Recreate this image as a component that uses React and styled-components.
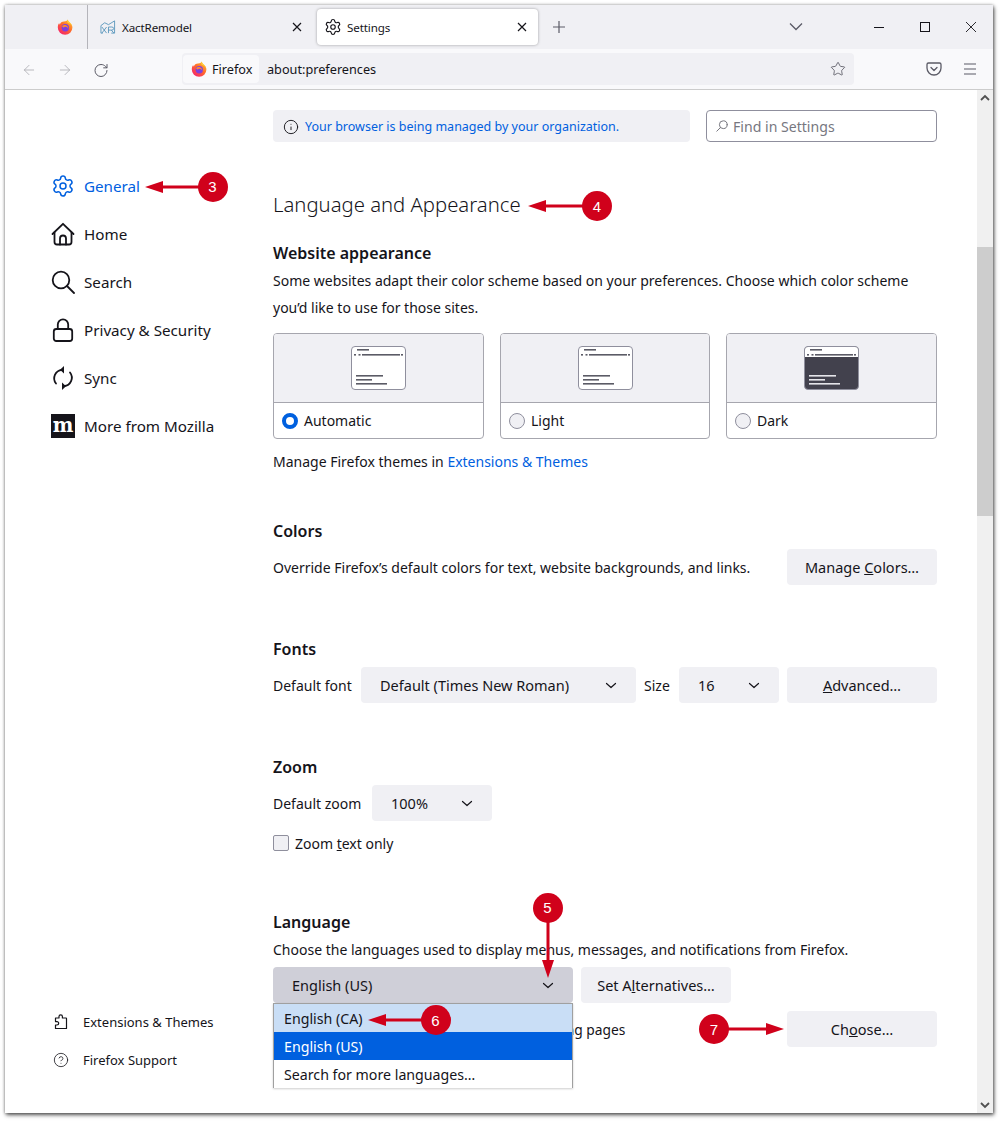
import React from "react";
import styled, { createGlobalStyle } from "styled-components";
import { ArrowLeft, ArrowRight, RotateCw, Star, Info, CircleHelp, Settings } from "lucide-react";

const FONT = `"Noto Sans", "Open Sans", sans-serif`;

const Global = createGlobalStyle`
  * { box-sizing: border-box; }
  html { overflow: hidden; background: #fff; }
  html, body { margin: 0; }
  body { padding: 5px 0 0 5px; min-height: 100vh; font-family: ${FONT}; color: #15141a; font-size: 14px; }
`;

const Frame = styled.div`
  width: 988px;
  height: 1108px;
  display: flex;
  flex-direction: column;
  background: #fff;
  box-shadow: 1px 2px 4px rgba(0,0,0,.65), 0 0 3px rgba(0,0,0,.3);
`;

const TabStrip = styled.div`
  height: 44px;
  flex: none;
  display: flex;
  align-items: center;
  background: #f0f0f4;
`;
const PinnedTab = styled.div`
  width: 83px;
  height: 100%;
  padding-left: 52px;
  display: flex;
  align-items: center;
  border-right: 1px solid #b4b4ba;
`;
const Tab = styled.div`
  height: 36px;
  width: ${p => p.$width}px;
  display: flex;
  align-items: center;
  gap: ${p => p.$gap}px;
  padding: 0 ${p => p.$right}px 0 ${p => p.$left}px;
  font-size: 11.6px;
  letter-spacing: -0.12px;
  border-radius: 4px;
  background: ${p => (p.$active ? "#fff" : "transparent")};
  box-shadow: ${p => (p.$active ? "0 0 3px rgba(0,0,0,.35)" : "none")};
`;
const TabLabel = styled.span`flex: 1;`;
const NewTab = styled.div`
  margin-left: 13px;
  display: flex;
`;
const Spacer = styled.div`flex: 1;`;
const TabList = styled.div`
  margin-right: 52px;
  display: flex;
`;
const WinButton = styled.div`
  width: 46px;
  display: flex;
  justify-content: center;
`;
const WinControls = styled.div`
  display: flex;
  margin-right: -1px;
`;

const Toolbar = styled.div`
  height: 41px;
  flex: none;
  display: flex;
  align-items: center;
  padding: 0 15px 0 16px;
  background: #f9f9fb;
  border-bottom: 1px solid #ccc;
`;
const ToolButton = styled.div`
  width: 16px;
  height: 16px;
  flex: none;
  display: flex;
  align-items: center;
  justify-content: center;
  margin-right: ${p => p.$gap || 0}px;
  margin-top: ${p => (p.$low ? 2 : 0)}px;
  color: ${p => (p.$muted ? "#a9a9b0" : "#5b5b66")};
`;
const UrlBar = styled.div`
  width: 672px;
  height: 32px;
  margin: 0 72px 0 73px;
  display: flex;
  align-items: center;
  padding: 0 8px 0 1px;
  background: #f0f0f4;
  border-radius: 4px;
  font-size: 12.7px;
`;
const Identity = styled.div`
  width: 76px;
  height: 28px;
  display: flex;
  align-items: center;
  gap: 5px;
  padding-left: 8px;
  background: #f9f9fb;
  border-radius: 4px;
`;
const UrlText = styled.span`
  flex: 1;
  margin-left: 8px;
`;

const Body = styled.div`
  flex: 1;
  min-height: 0;
  display: flex;
`;
const Sidebar = styled.nav`
  width: 268px;
  flex: none;
  display: flex;
  flex-direction: column;
  justify-content: space-between;
  padding: 72px 0 34px 46px;
`;
const NavGroup = styled.div`display: flex; flex-direction: column;`;
const NavItem = styled.div`
  height: 48px;
  display: flex;
  align-items: center;
  gap: 9px;
  font-size: 15.2px;
  color: ${p => (p.$active ? "#0060df" : "#15141a")};
`;
const NavIcon = styled.span`
  width: 24px;
  height: 24px;
  flex: none;
  display: flex;
  align-items: center;
  justify-content: center;
`;
const FootItem = styled.div`
  height: 38px;
  padding-left: 2px;
  display: flex;
  align-items: center;
  gap: 14px;
  font-size: 13px;
`;
const FootIcon = styled.span`
  width: 16px;
  height: 16px;
  flex: none;
  display: flex;
  align-items: center;
  justify-content: center;
`;
const Main = styled.main`
  width: 664px;
  flex: none;
  padding-top: 20px;
`;
const TopRow = styled.div`
  display: flex;
  gap: 16px;
  height: 32px;
`;
const Notice = styled.div`
  flex: 1;
  display: flex;
  align-items: center;
  gap: 6px;
  padding: 1px 0 0 10px;
  background: #f0f0f4;
  border-radius: 4px;
  font-size: 12.5px;
  line-height: 18px;
  color: #0060df;
`;
const NoticeText = styled.span`
  padding-top: 1px;
`;
const SearchBox = styled.div`
  width: 231px;
  display: flex;
  align-items: center;
  gap: 5px;
  padding-left: 9px;
  border: 1px solid #8f8f9d;
  border-radius: 4px;
  font-size: 14.1px;
  color: #77777f;
`;
const PageTitle = styled.h1`
  margin: 47px 0 0;
  font-size: 20.3px;
  line-height: 30px;
  font-weight: 300;
`;
const Heading = styled.h2`
  margin: ${p => p.$top}px 0 0;
  font-size: 16px;
  line-height: 24px;
  font-weight: 600;
`;
const Para = styled.p`
  margin: ${p => p.$top}px 0 0;
  font-size: 14px;
  line-height: ${p => p.$lh || 22}px;
`;
const Link = styled.span`color: #0060df;`;
const Cards = styled.div`
  margin-top: 12px;
  display: grid;
  grid-template-columns: 211px 210px 211px;
  gap: 16px;
`;
const Card = styled.div`
  height: 106px;
  border: 1px solid #a6a6ae;
  border-radius: 4px;
  overflow: hidden;
`;
const CardPreview = styled.div`
  height: 69px;
  display: flex;
  align-items: center;
  justify-content: center;
  background: #f0f0f4;
  border-bottom: 1px solid #a6a6ae;
`;
const CardFoot = styled.div`
  height: 35px;
  display: flex;
  align-items: center;
  gap: 6px;
  padding-left: 8px;
  font-size: 14px;
`;
const Radio = styled.span`
  width: 16px;
  height: 16px;
  border-radius: 50%;
  background: ${p => (p.$on ? "#fff" : "#f0f0f4")};
  border: ${p => (p.$on ? "4.5px solid #0060df" : "1px solid #8f8f9d")};
`;
const Row = styled.div`
  margin-top: ${p => p.$top}px;
  height: ${p => p.$h || 36}px;
  display: flex;
  align-items: center;
  gap: ${p => p.$gap || 8}px;
  font-size: 14px;
`;
const Grow = styled.span`
  flex: 1;
  font-size: ${p => p.$size || 14}px;
`;
const FieldLabel = styled.span`
  width: ${p => p.$w}px;
  flex: none;
  white-space: nowrap;
`;
const Button = styled.div`
  width: ${p => p.$w}px;
  height: 36px;
  flex: none;
  display: flex;
  align-items: center;
  justify-content: center;
  background: #f0f0f4;
  border-radius: 4px;
  font-size: 14.5px;
`;
const Select = styled.div`
  width: ${p => p.$w}px;
  height: 36px;
  flex: none;
  display: flex;
  align-items: center;
  justify-content: space-between;
  padding: 0 17px 0 19px;
  background: ${p => (p.$open ? "#cfcfd8" : "#f0f0f4")};
  border-radius: 4px;
  font-size: 14.5px;
`;
const Check = styled.span`
  width: 16px;
  height: 16px;
  background: #f0f0f4;
  border: 1px solid #8f8f9d;
  border-radius: 2px;
`;
const LanguageArea = styled.div`position: relative;`;
const Dropdown = styled.div`
  position: absolute;
  left: 0;
  top: 36px;
  width: 300px;
  height: 85px;
  background: #fff;
  border: 1px solid #a0a0a0;
  box-shadow: 0 1px 2px rgba(0,0,0,.2);
  z-index: 2;
`;
const Option = styled.div`
  height: 28px;
  display: flex;
  align-items: center;
  padding-left: 10px;
  font-size: 14.2px;
  color: ${p => (p.$selected ? "#fff" : "#15141a")};
  background: ${p => (p.$selected ? "#0060df" : p.$hover ? "#c9def6" : "#fff")};
`;
const Scrollbar = styled.div`
  display: flex;
  flex-direction: column;
  align-items: center;
  justify-content: space-between;
  margin-left: 40px;
  width: 16px;
  flex: none;
  background: #f0f0f0;
  position: relative;
  padding: 3px 0;
`;
const Thumb = styled.div`
  position: absolute;
  left: 0;
  top: 157px;
  width: 16px;
  height: 269px;
  background: #cdcdcd;
`;
const CalloutBox = styled.div`
  position: absolute;
  left: ${p => p.$x - 15}px;
  top: ${p => p.$y - 15}px;
  width: 30px;
  height: 30px;
  z-index: 5;
`;
const Badge = styled.div`
  position: relative;
  width: 30px;
  height: 30px;
  border-radius: 50%;
  background: #d0011b;
  color: #fff;
  display: flex;
  align-items: center;
  justify-content: center;
  font-family: "Liberation Sans", sans-serif;
  font-size: 15px;
`;
const ArrowSvg = styled.svg`
  position: absolute;
  left: 15px;
  top: 8px;
  transform-origin: 0 50%;
  transform: rotate(${p => p.$rot}deg);
  display: block;
`;

const Foxy = () => (
  <svg width="16" height="16" viewBox="0 0 16 16">
    <defs>
      <linearGradient id="fx" x1="0.85" y1="0.1" x2="0.2" y2="0.95">
        <stop offset="0" stopColor="#ffb62e" />
        <stop offset="0.45" stopColor="#ff6a2a" />
        <stop offset="1" stopColor="#f5246b" />
      </linearGradient>
    </defs>
    <path d="M10.6.6c.2 1.300 1.100 1.900 2.100 2.800C14.700 5 15.400 6.800 15.400 8.500A7.300 7.300 0 0 1 .8 8.500C.8 6.800 1.200 5.200 2.200 4c0 .8.200 1.300.700 1.600C3.400 3.700 5 2.600 7 2.500 8.900 2.400 10.300 1.900 10.600.6z" fill="url(#fx)" />
    <path d="M10.600.6c.2 1.300 1.100 1.900 2.100 2.800 1.300 1.100 2 2.300 2.400 3.500-.9-1.600-2.500-2.700-4.400-3-.5-.8-.4-2.100-.1-3.300z" fill="#ffd23a" />
    <circle cx="8.300" cy="8.700" r="3.700" fill="#7b3fe0" />
    <path d="M5 7.400c1.100-1.300 3-1.800 4.500-1 1.400.7 2 2.200 1.600 3.600-.2-1.300-1.200-2.200-2.500-2.200-.9 0-1.500.4-1.700 1-.5-.7-1.100-1.200-1.900-1.400z" fill="#ff8a2a" />
  </svg>
);

const XactLogo = () => (
  <svg width="16" height="16" viewBox="0 0 17 16" fill="none" stroke="#4e8fb8" strokeWidth="0.9">
    <path d="M1 6.500 5 3.500 9 5.500 15.500 1.500V14.500H12M1 6.500V14.500H3" />
    <path d="M2 8 7 14.500M7 8 2 14.500M9 14.500V8H12.500Q14.500 8 14.500 9.700 14.500 11.300 12.500 11.300H9M12 11.300 14.800 14.500" />
  </svg>
);

const HomeIcon = () => (
  <svg width="24" height="24" viewBox="0 0 24 24" fill="none" stroke="#15141a" strokeWidth="1.800" strokeLinecap="round" strokeLinejoin="round">
    <path d="M1.500 12 12 1.800 22.500 12" />
    <path d="M3.500 10.500V20a2.500 2.500 0 0 0 2.500 2.500h12a2.500 2.500 0 0 0 2.500-2.500V10.500" />
    <path d="M9 22.500V16.500a3 3 0 0 1 6 0v6" />
  </svg>
);
const SearchIcon = () => (
  <svg width="24" height="24" viewBox="0 0 24 24" fill="none" stroke="#15141a" strokeWidth="1.800" strokeLinecap="round">
    <circle cx="10" cy="10" r="8.300" />
    <path d="M16 16l7 7" />
  </svg>
);
const LockIcon = () => (
  <svg width="24" height="24" viewBox="0 0 24 24" fill="none" stroke="#15141a" strokeWidth="1.800" strokeLinecap="round">
    <rect x="2.800" y="11" width="18.400" height="12" rx="2.500" />
    <path d="M6.800 11V6.500a5.200 5.200 0 0 1 10.400 0V11" />
  </svg>
);
const SyncIcon = () => (
  <svg width="24" height="24" viewBox="0 0 24 24" fill="none" stroke="#15141a" strokeWidth="1.800" strokeLinecap="round">
    <path d="M5 17.500A8.500 8.500 0 0 1 11 3.800" />
    <path d="M19 6.500A8.500 8.500 0 0 1 13 20.200" />
    <path d="M10.500 0 6.500 3.800 10.500 7.500z" fill="#15141a" stroke="none" transform="translate(2.500 0)" />
    <path d="M13.500 16.500 17.500 20.200 13.500 24z" fill="#15141a" stroke="none" transform="translate(-2.500 0)" />
  </svg>
);
const MozillaIcon = () => (
  <svg width="24" height="24" viewBox="0 0 24 24">
    <rect width="24" height="24" fill="#15141a" />
    <text x="12" y="18" textAnchor="middle" fontFamily="DejaVu Serif, serif" fontWeight="700" fontSize="19.500" fill="#fff">m</text>
  </svg>
);
const PuzzleIcon = () => (
  <svg width="16" height="16" viewBox="0 0 16 16" fill="none" stroke="#15141a" strokeWidth="1.200" strokeLinejoin="round">
    <path d="M2.500 4H6V2.500a1.700 1.700 0 0 1 3.400 0V4H13a.5.5 0 0 1 .5.5V14.500H2.500V11H4a1.700 1.700 0 0 0 0-3.400H2.500z" />
  </svg>
);
const Pocket = () => (
  <svg width="16" height="16" viewBox="0 0 16 16" fill="none" stroke="#5b5b66" strokeWidth="1.300" strokeLinecap="round" strokeLinejoin="round">
    <path d="M2.500 2h11A1.500 1.500 0 0 1 15 3.500V7A7 7 0 0 1 1 7V3.500A1.500 1.500 0 0 1 2.500 2z" />
    <path d="M5 6.500 8 9.500 11 6.500" />
  </svg>
);
const MenuIcon = () => (
  <svg width="16" height="16" viewBox="0 0 16 16" stroke="#5b5b66" strokeWidth="1.200">
    <path d="M2 3h12M2 8h12M2 13h12" />
  </svg>
);
const Chevron = () => (
  <svg width="16" height="16" viewBox="0 0 16 16" fill="none" stroke="#15141a" strokeWidth="1.200" strokeLinecap="round" strokeLinejoin="round">
    <path d="M3.500 6.500 8 10.500 12.500 6.500" />
  </svg>
);
const TabChevron = () => (
  <svg width="16" height="16" viewBox="0 0 16 16" fill="none" stroke="#5b5b66" strokeWidth="1.300">
    <path d="M2 4.500 8 10.500 14 4.500" />
  </svg>
);
const CloseSmall = () => (
  <svg width="16" height="16" viewBox="0 0 16 16" fill="none" stroke="#15141a" strokeWidth="1.200">
    <path d="M4 4 12 12M12 4 4 12" />
  </svg>
);
const PlusIcon = () => (
  <svg width="16" height="16" viewBox="0 0 16 16" fill="none" stroke="#5b5b66" strokeWidth="1.200">
    <path d="M8 2V14M2 8H14" />
  </svg>
);
const WinMin = () => (
  <svg width="12" height="12" viewBox="0 0 12 12" stroke="#15141a" strokeWidth="1">
    <path d="M1 6.500H11" />
  </svg>
);
const WinMax = () => (
  <svg width="12" height="12" viewBox="0 0 12 12" fill="none" stroke="#15141a" strokeWidth="1">
    <rect x="1.500" y="1.500" width="9" height="9" />
  </svg>
);
const WinClose = () => (
  <svg width="12" height="12" viewBox="0 0 12 12" fill="none" stroke="#15141a" strokeWidth="0.900">
    <path d="M1 1 11 11M11 1 1 11" />
  </svg>
);
const FindGlass = () => (
  <svg width="12" height="12" viewBox="0 0 12 12" fill="none" stroke="#77777f" strokeWidth="1" strokeLinecap="round">
    <circle cx="7.300" cy="4.700" r="3.900" />
    <path d="M4.500 7.500 .8 11.200" />
  </svg>
);
const ScrollUp = () => (
  <svg width="10" height="10" viewBox="0 0 10 10" fill="none" stroke="#505050" strokeWidth="1.800">
    <path d="M1 7 5 3 9 7" />
  </svg>
);
const ScrollDown = () => (
  <svg width="10" height="10" viewBox="0 0 10 10" fill="none" stroke="#505050" strokeWidth="1.800">
    <path d="M1 3 5 7 9 3" />
  </svg>
);

const Mini = ({ dark }) => {
  const lines = dark ? "#e5e5ea" : "#5b5b66";
  return (
    <svg width="55" height="44" viewBox="0 0 55 44">
      <rect x=".5" y=".5" width="54" height="43" rx="3.500" fill={dark ? "#42414d" : "#fff"} stroke="#8f8f9d" />
      {dark && <path d="M1 11V4a3 3 0 0 1 3-3h47a3 3 0 0 1 3 3v7z" fill="#fff" />}
      <g fill="#5b5b66">
        <rect x="6" y="3" width="12" height="1.600" />
        <rect x="3" y="8" width="2" height="1.600" />
        <rect x="7.500" y="8" width="2" height="1.600" />
        <rect x="11" y="8" width="38" height="1.600" />
        <rect x="50" y="8" width="2" height="1.600" />
      </g>
      <g fill={lines}>
        <rect x="5" y="29" width="27" height="1.600" />
        <rect x="5" y="33" width="16" height="1.600" />
        <rect x="5" y="37" width="31" height="1.600" />
      </g>
    </svg>
  );
};

const Callout = ({ n, x, y, rot, len }) => (
  <CalloutBox $x={x} $y={y}>
    <ArrowSvg $rot={rot} width={len} height="14" viewBox={`0 0 ${len} 14`}>
      <rect x="0" y="5.500" width={len - 17} height="3" fill="#d0011b" />
      <path d={`M${len - 18} 1 L${len} 7 L${len - 18} 13 z`} fill="#d0011b" />
    </ArrowSvg>
    <Badge>{n}</Badge>
  </CalloutBox>
);

export default function App() {
  return (
    <>
      <Global />
      <Frame>
        <TabStrip>
          <PinnedTab><Foxy /></PinnedTab>
          <Tab $width={229} $left={12} $right={12} $gap={6}>
            <XactLogo />
            <TabLabel>XactRemodel</TabLabel>
            <CloseSmall />
          </Tab>
          <Tab $width={221} $left={7} $right={8} $gap={5} $active>
            <Settings size={18} strokeWidth={1.500} color="#15141a" />
            <TabLabel>Settings</TabLabel>
            <CloseSmall />
          </Tab>
          <NewTab><PlusIcon /></NewTab>
          <Spacer />
          <TabList><TabChevron /></TabList>
          <WinControls>
            <WinButton><WinMin /></WinButton>
            <WinButton><WinMax /></WinButton>
            <WinButton><WinClose /></WinButton>
          </WinControls>
        </TabStrip>
        <Toolbar>
          <ToolButton $muted $low $gap={20}><ArrowLeft size={18} strokeWidth={1.200} /></ToolButton>
          <ToolButton $muted $low $gap={20}><ArrowRight size={18} strokeWidth={1.200} /></ToolButton>
          <ToolButton $low><RotateCw size={17} strokeWidth={1.500} /></ToolButton>
          <UrlBar>
            <Identity><Foxy />Firefox</Identity>
            <UrlText>about:preferences</UrlText>
            <ToolButton><Star size={18} strokeWidth={1.300} /></ToolButton>
          </UrlBar>
          <ToolButton $gap={20}><Pocket /></ToolButton>
          <ToolButton><MenuIcon /></ToolButton>
        </Toolbar>
        <Body>
          <Sidebar>
            <NavGroup>
              <NavItem $active><NavIcon><Settings size={28} color="#0060df" strokeWidth={1.500} /></NavIcon>General</NavItem>
              <NavItem><NavIcon><HomeIcon /></NavIcon>Home</NavItem>
              <NavItem><NavIcon><SearchIcon /></NavIcon>Search</NavItem>
              <NavItem><NavIcon><LockIcon /></NavIcon>Privacy &amp; Security</NavItem>
              <NavItem><NavIcon><SyncIcon /></NavIcon>Sync</NavItem>
              <NavItem><NavIcon><MozillaIcon /></NavIcon>More from Mozilla</NavItem>
            </NavGroup>
            <NavGroup>
              <FootItem><FootIcon><PuzzleIcon /></FootIcon>Extensions &amp; Themes</FootItem>
              <FootItem><FootIcon><CircleHelp size={18} strokeWidth={1.200} /></FootIcon>Firefox Support</FootItem>
            </NavGroup>
          </Sidebar>
          <Main>
            <TopRow>
              <Notice><Info size={16} strokeWidth={1.400} color="#15141a" /><NoticeText>Your browser is being managed by your organization.</NoticeText></Notice>
              <SearchBox><FindGlass />Find in Settings</SearchBox>
            </TopRow>
            <PageTitle>Language and Appearance</PageTitle>
            <Heading $top={22}>Website appearance</Heading>
            <Para $top={2} $lh={27}>Some websites adapt their color scheme based on your preferences. Choose which color scheme you’d like to use for those sites.</Para>
            <Cards>
              <Card><CardPreview><Mini /></CardPreview><CardFoot><Radio $on />Automatic</CardFoot></Card>
              <Card><CardPreview><Mini /></CardPreview><CardFoot><Radio />Light</CardFoot></Card>
              <Card><CardPreview><Mini dark /></CardPreview><CardFoot><Radio />Dark</CardFoot></Card>
            </Cards>
            <Para $top={12}>Manage Firefox themes in <Link>Extensions &amp; Themes</Link></Para>
            <Heading $top={46}>Colors</Heading>
            <Row $top={6}>
              <Grow>Override Firefox’s default colors for text, website backgrounds, and links.</Grow>
              <Button $w={150}><span>Manage <u>C</u>olors…</span></Button>
            </Row>
            <Heading $top={52}>Fonts</Heading>
            <Row $top={6}>
              <FieldLabel $w={80}>Default font</FieldLabel>
              <Select $w={275}>Default (Times New Roman)<Chevron /></Select>
              <FieldLabel $w={27}>Size</FieldLabel>
              <Select $w={100}>16<Chevron /></Select>
              <Button $w={150}><span><u>A</u>dvanced…</span></Button>
            </Row>
            <Heading $top={52}>Zoom</Heading>
            <Row $top={6}>
              <FieldLabel $w={91}>Default zoom</FieldLabel>
              <Select $w={120}>100%<Chevron /></Select>
            </Row>
            <Row $top={11} $h={22} $gap={6}>
              <Check /><span>Zoom <u>t</u>ext only</span>
            </Row>
            <Heading $top={56}>Language</Heading>
            <Para $top={5}>Choose the languages used to display menus, messages, and notifications from Firefox.</Para>
            <LanguageArea>
              <Row $top={6}>
                <Select $w={300} $open>English (US)<Chevron /></Select>
                <Button $w={150}><span>Set A<u>l</u>ternatives…</span></Button>
              </Row>
              <Row $top={8}>
                <Grow $size={13.8}>Choose your preferred languages for displaying pages</Grow>
                <Button $w={150}><span>Ch<u>o</u>ose…</span></Button>
              </Row>
              <Dropdown>
                <Option $hover>English (CA)</Option>
                <Option $selected>English (US)</Option>
                <Option>Search for more languages…</Option>
              </Dropdown>
            </LanguageArea>
          </Main>
          <Scrollbar>
            <ScrollUp />
            <Thumb />
            <ScrollDown />
          </Scrollbar>
        </Body>
      </Frame>
      <Callout n={3} x={212.500} y={186.500} rot={180} len={68} />
      <Callout n={4} x={597} y={206} rot={180} len={69} />
      <Callout n={5} x={547.500} y={907.500} rot={90} len={70} />
      <Callout n={6} x={435.500} y={1020} rot={180} len={68} />
      <Callout n={7} x={714} y={1029} rot={0} len={70} />
    </>
  );
}
